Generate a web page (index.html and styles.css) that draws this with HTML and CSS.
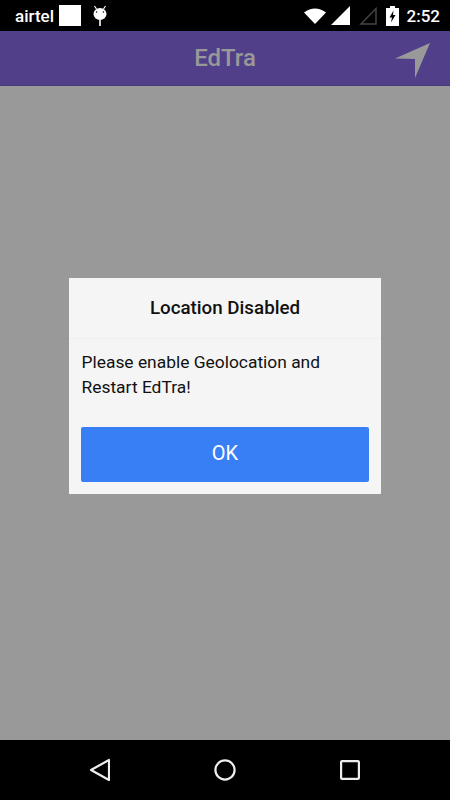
FILE: index.html
```html
<!DOCTYPE html>
<html lang="en">
<head>
    <meta charset="UTF-8">
    <meta name="viewport" content="width=device-width, initial-scale=1.0">
    <link rel="stylesheet" href="styles.css">
    <title>EdTra</title>
</head>
<body>
    <div class="status-bar">
        <div class="status-left">
            <span class="carrier">airtel</span>
            <span class="carrier-box"></span>
            <svg class="bug" width="16" height="22" viewBox="0 0 16 22">
                <path d="M2.5 1 L4.5 4 M13.5 1 L11.5 4" stroke="#fff" stroke-width="1.2" fill="none"/>
                <ellipse cx="8" cy="9" rx="6.5" ry="6" fill="#fff"/>
                <circle cx="4.6" cy="7" r=".7" fill="#000"/>
                <circle cx="11.4" cy="7" r=".7" fill="#000"/>
                <rect x="7.2" y="15" width="1.6" height="6" fill="#fff"/>
            </svg>
        </div>
        <div class="status-right">
            <svg class="wifi" width="22" height="16" viewBox="0 0 22 16">
                <path d="M0 4.5 Q11 -3.5 22 4.5 L11 16 Z" fill="#fff"/>
            </svg>
            <svg class="signal" width="19" height="19" viewBox="0 0 19 19">
                <path d="M19 0 V19 H0 Z" fill="#fff"/>
            </svg>
            <svg class="signal-off" width="18" height="19" viewBox="0 0 18 19">
                <path d="M17 2.5 V18 H2 Z" fill="none" stroke="#444" stroke-width="1.5"/>
            </svg>
            <svg class="battery" width="13" height="20" viewBox="0 0 13 20">
                <path d="M4 0 H9 V2 H13 V20 H0 V2 H4 Z" fill="#fff"/>
                <path d="M7.5 4.5 L3.5 11.5 H6 L5 16.5 L9.5 9 H7 Z" fill="#000"/>
            </svg>
            <span class="clock">2:52</span>
        </div>
    </div>

    <div class="app-bar">
        <h1 class="app-title">EdTra</h1>
        <svg class="locate" width="36" height="36" viewBox="0 0 36 36">
            <path d="M0 15.5 L35 0 L20 35 L20 16 Z" fill="#999"/>
        </svg>
    </div>

    <div class="content">
        <div class="popup">
            <div class="popup-head">Location Disabled</div>
            <div class="popup-body">Please enable Geolocation and Restart EdTra!</div>
            <div class="popup-buttons">
                <button class="btn">OK</button>
            </div>
        </div>
    </div>

    <div class="nav-bar">
        <svg width="22" height="24" viewBox="0 0 22 24">
            <path d="M21 2 V22 L3 12 Z" fill="none" stroke="#eee" stroke-width="2.2" stroke-linejoin="round"/>
        </svg>
        <svg width="22" height="22" viewBox="0 0 22 22">
            <circle cx="11" cy="11" r="9.6" fill="none" stroke="#eee" stroke-width="2.2"/>
        </svg>
        <svg width="20" height="20" viewBox="0 0 20 20">
            <rect x="1.1" y="1.1" width="17.8" height="17.8" rx="1" fill="none" stroke="#eee" stroke-width="2.2"/>
        </svg>
    </div>
</body>
</html>
```

FILE: styles.css
```css
* {
    box-sizing: border-box;
}

body {
    display: flex;
    flex-direction: column;
    height: 800px;
    margin: 0;
    font-family: Roboto, "Noto Sans", sans-serif;
    background-color: #999;
    overflow: hidden;
}

.status-bar {
    display: flex;
    justify-content: space-between;
    align-items: center;
    height: 31px;
    padding: 0 10px 0 15px;
    background-color: #000;
    color: #fff;
}

.status-left,
.status-right {
    display: flex;
    align-items: center;
}

.carrier {
    font-size: 17px;
    font-weight: 500;
}

.carrier-box {
    width: 22px;
    height: 21px;
    margin-left: 5px;
    background-color: #fff;
}

.bug {
    margin-left: 11px;
}

.wifi {
    margin-right: 5px;
}

.signal {
    margin-right: 9px;
}

.signal-off {
    margin-right: 9px;
}

.clock {
    margin-left: 8px;
    font-size: 17px;
    font-weight: 500;
}

.app-bar {
    display: flex;
    justify-content: center;
    align-items: center;
    position: relative;
    height: 55px;
    background-color: #523f8a;
    border-bottom: 1px solid #4a3a7a;
}

.app-title {
    margin: 0;
    font-size: 24px;
    font-weight: 500;
    color: #999;
}

.locate {
    position: absolute;
    top: 12px;
    right: 19px;
}

.content {
    flex: 1;
    display: flex;
    justify-content: center;
    align-items: center;
    padding-bottom: 54px;
}

.popup {
    width: 312px;
    height: 216px;
    background-color: #f5f5f5;
}

.popup-head {
    height: 61px;
    padding-top: 19px;
    font-size: 18.75px;
    font-weight: 500;
    line-height: 22px;
    text-align: center;
    color: #111;
    border-bottom: 1px solid #eee;
}

.popup-body {
    height: 87.5px;
    padding: 11px 12px 0 12.5px;
    font-size: 17.4px;
    line-height: 25px;
    color: #111;
}

.popup-buttons {
    padding: 0 12px;
}

.btn {
    display: block;
    width: 100%;
    height: 55.5px;
    padding: 0 0 2px;
    font-family: inherit;
    font-size: 20px;
    color: #fff;
    background-color: #387ef5;
    border: none;
    border-radius: 2px;
}

.nav-bar {
    display: flex;
    justify-content: space-between;
    align-items: center;
    height: 60px;
    padding: 0 90px 0 88px;
    background-color: #000;
}
```
